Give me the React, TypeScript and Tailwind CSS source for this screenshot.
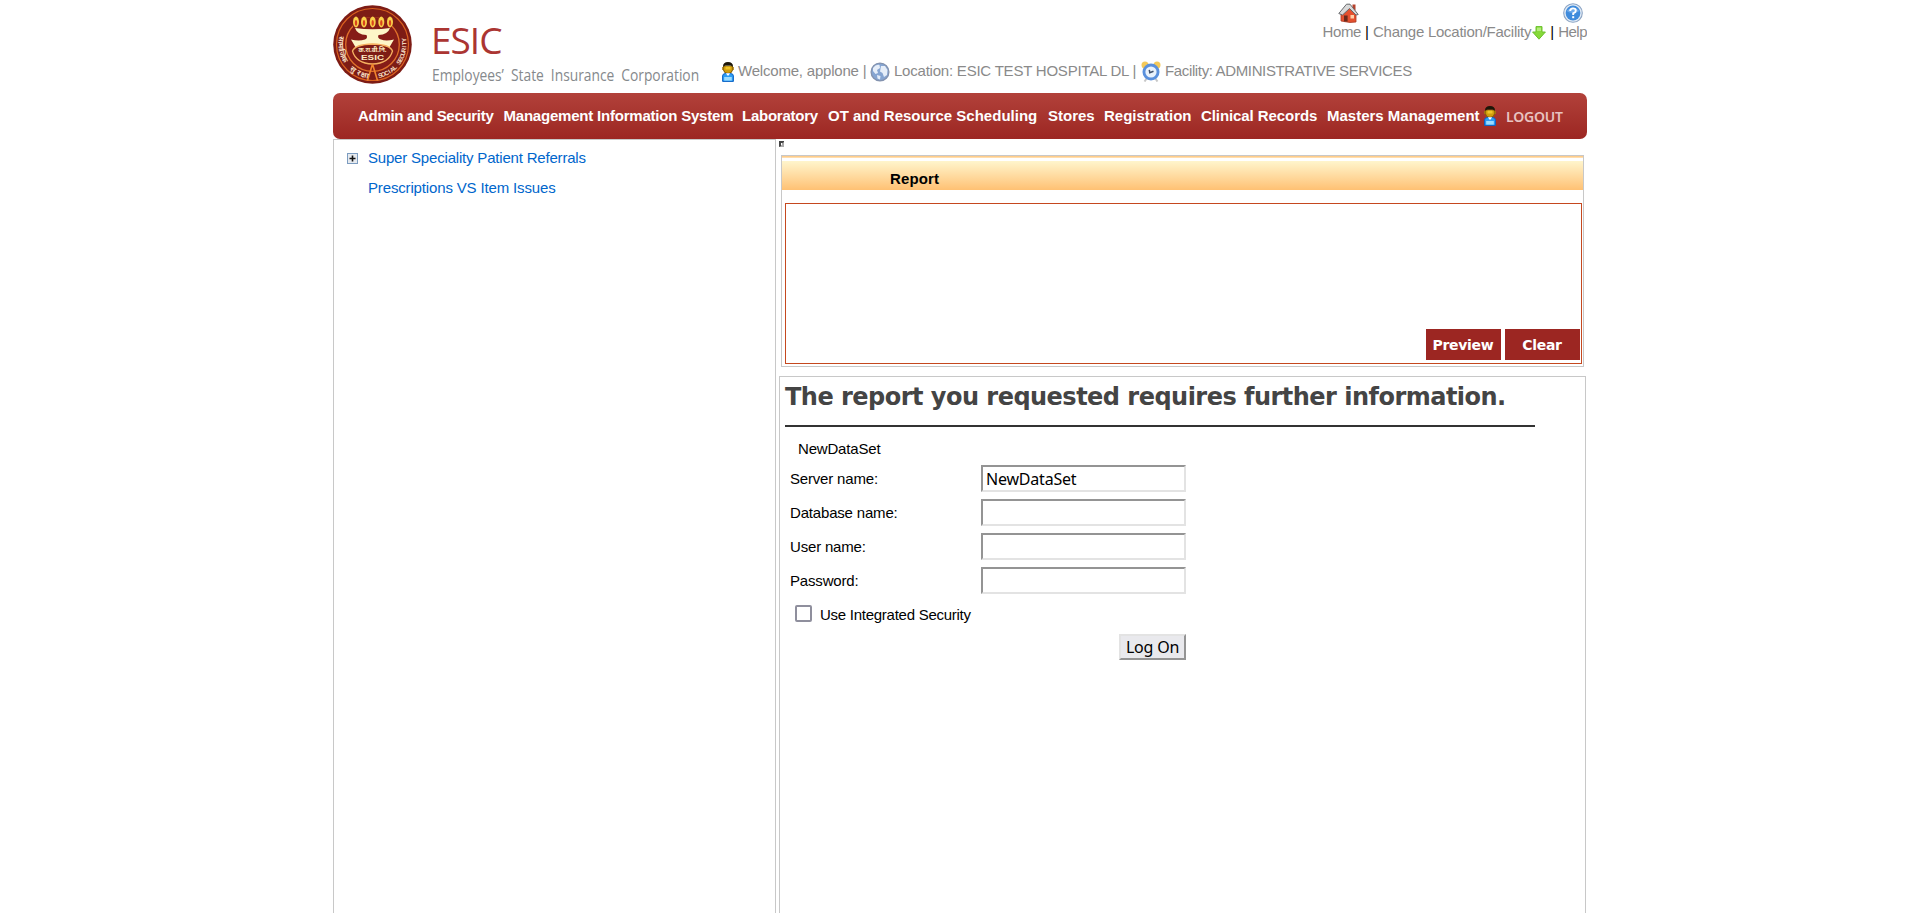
import React from "react";

function RimLetters({ glyphs, from, to, size, family }: { glyphs: string[]; from: number; to: number; size: number; family: string }) {
  return (
    <>
      {glyphs.map((g, i) => {
        if (g === " ") return null;
        const a = from + ((to - from) * i) / (glyphs.length - 1);
        const rad = (a * Math.PI) / 180;
        const x = 39.5 + 34 * Math.cos(rad);
        const y = 39.5 + 34 * Math.sin(rad);
        return (
          <text
            key={i}
            transform={`translate(${x.toFixed(2)} ${y.toFixed(2)}) rotate(${(a - 90).toFixed(1)})`}
            textAnchor="middle"
            fontSize={size}
            fontWeight="bold"
            fill="#f5dcc0"
            fontFamily={family}
          >
            {g}
          </text>
        );
      })}
    </>
  );
}

function Emblem() {
  return (
    <svg width="80" height="80" viewBox="0 0 80 80" className="block">
      <circle cx="39.5" cy="39.5" r="39.3" fill="#7d1c15" />
      <circle cx="39.5" cy="39.5" r="36" fill="none" stroke="#d9601f" strokeWidth="1.2" />
      <circle cx="39.5" cy="39.5" r="26.8" fill="#861c17" stroke="#e0702a" strokeWidth="1.3" />
      <path d="M19 19 Q39.5 5 60 19 L57 26 L22 26Z" fill="#861c17" />
      {[23, 31, 39.7, 48.3, 57].map((x) => (
        <g key={x}>
          <ellipse cx={x} cy="17" rx="3" ry="5.4" fill="#f9cf4a" />
          <ellipse cx={x} cy="18" rx="1.2" ry="3" fill="#d9441c" />
        </g>
      ))}
      <path d="M22 23 Q40 25.5 57 23 Q55 29.5 45.5 30 Q44 33 48 34.5 Q53 36.5 61 34.5 L56 43 Q40 36 23 43 L18 34.5 Q26 36.5 32 34.5 Q35 33 33.5 30 Q24 29.5 22 23Z" fill="#fdf6c8" />
      <path d="M19.5 46 Q22 39.5 39.5 39 Q57 39.5 59.5 46 Q56 58.5 39.5 59 Q23 58.5 19.5 46Z" fill="#7d1c15" stroke="#f5b060" strokeWidth="1.3" />
      <path d="M39.5 59 L34.5 75.5 M39.5 59 L44.5 75.5" fill="none" stroke="#f0842e" strokeWidth="1.6" />
      <text x="39.5" y="47.4" textAnchor="middle" fontSize="6.4" fontWeight="bold" fill="#fbe9c0" fontFamily="Noto Sans, sans-serif" textLength="28" lengthAdjust="spacingAndGlyphs">क.रा.बी.नि.</text>
      <text x="39.5" y="54.8" textAnchor="middle" fontSize="7" fontWeight="bold" fill="#fbe9c0" fontFamily="Liberation Sans, sans-serif" textLength="23" lengthAdjust="spacingAndGlyphs">ESIC</text>
      <RimLetters glyphs={[..."SOCIAL SECURITY"]} from={76} to={-8} size={6.2} family="Liberation Sans, sans-serif" />
      <RimLetters glyphs={["सा", "मा", "जि", "क", " ", "सु", "र", "क्षा"]} from={188} to={104} size={7.4} family="Noto Sans, sans-serif" />
    </svg>
  );
}

function UserIcon() {
  return (
    <svg width="12" height="20" viewBox="0 0 12 20" className="block shrink-0">
      <path d="M1.5 4 L10.5 4 L10.5 8 Q10 11.5 6 11.5 Q2 11.5 1.5 8Z" fill="#d19c0c" stroke="#7a5a08" />
      <rect x="0.2" y="5" width="1.5" height="3" fill="#a97a08" />
      <rect x="10.3" y="5" width="1.5" height="3" fill="#a97a08" />
      <path d="M1 4.5 Q1 0 6 0 Q11 0 11 4.5 L8.5 3.5 L3.5 3.5Z" fill="#1c1608" />
      <rect x="3.5" y="4.5" width="5" height="3" fill="#f0c426" />
      <path d="M0.6 19.4 L0.6 14 Q0.6 11.5 3.5 11.5 L8.5 11.5 Q11.4 11.5 11.4 14 L11.4 19.4Z" fill="#2c9cf4" stroke="#0b62c4" />
      <path d="M3.8 11.3 L8.2 11.3 L6 14Z" fill="#fff" />
      <rect x="2.2" y="15" width="7.6" height="3.6" fill="#9bdcff" />
    </svg>
  );
}

function GlobeIcon() {
  return (
    <svg width="20" height="20" viewBox="0 0 20 20" className="block shrink-0">
      <circle cx="10" cy="10" r="8.9" fill="#86a5d2" stroke="#8392ae" strokeWidth="1.3" />
      <path d="M3 6 Q6 2 9.5 3 L10 6 L7 8 L8 11 L5.5 12 L3 9Z M11 4 L15 4 L17.5 8 L17 13 L14 15 L12.5 11 L10 9.5Z M7 13 L10.5 14 L10 17.5 L7.5 16.5Z" fill="#e6eef9" />
    </svg>
  );
}

function ClockIcon() {
  return (
    <svg width="20" height="21" viewBox="0 0 20 21" className="block shrink-0">
      <path d="M3.5 20.5 L6 17 M16.5 20.5 L14 17" stroke="#c7c7c7" strokeWidth="2" />
      <circle cx="4" cy="4" r="3.5" fill="#f4c95a" />
      <circle cx="16" cy="4" r="3.5" fill="#f4c95a" />
      <circle cx="10" cy="11" r="8.5" fill="#5a90dc" />
      <circle cx="10" cy="11" r="5.6" fill="#e9f2fc" />
      <path d="M8.3 8.8 L8.8 11.8 L12.5 10.3" fill="none" stroke="#40506a" strokeWidth="1.5" />
    </svg>
  );
}

function HomeIcon() {
  return (
    <svg width="21" height="20" viewBox="0 0 21 20" className="block">
      <rect x="14.5" y="1.5" width="3" height="6" fill="#b5422c" />
      <path d="M3 11 L10.5 4 L18 11 L18 19 L12 19.5 L3 18Z" fill="#e4512f" stroke="#a93a25" strokeWidth="0.8" />
      <rect x="6" y="12.5" width="3.6" height="6" fill="#6b2a1c" />
      <rect x="12.5" y="12" width="3.5" height="3.5" fill="#ffd0a8" />
      <path d="M0.8 10.5 L8.5 1.2 L12 1.2 L20.2 11.5 L18 12 L11.5 5.5 L4.5 12Z" fill="#d9d9d9" stroke="#66696c" strokeWidth="1" />
    </svg>
  );
}

function HelpIcon() {
  return (
    <svg width="20" height="20" viewBox="0 0 20 20" className="block">
      <circle cx="10" cy="10" r="9.3" fill="#e2ebf5" stroke="#8ba4c4" strokeWidth="1.1" />
      <circle cx="10" cy="10" r="7.4" fill="#3f8bdc" />
      <path d="M3.4 8 Q10 1 16.6 8 Q10 12 3.4 8" fill="#6faaea" />
      <path d="M7.2 8 Q7.2 5.4 10 5.4 Q12.8 5.4 12.8 7.7 Q12.8 9.2 10.2 10.4 L10.2 12" fill="none" stroke="#fff" strokeWidth="1.9" />
      <rect x="9.2" y="13.2" width="2" height="2" fill="#fff" />
    </svg>
  );
}

function DownIcon() {
  return (
    <svg width="14" height="14" viewBox="0 0 14 14" className="block shrink-0">
      <path d="M4 0.6 L10 0.6 L10 6 L13.4 6 L7 13.2 L0.6 6 L4 6Z" fill="#86d93a" stroke="#6cc12e" strokeWidth="1" />
      <path d="M5 1.6 L9 1.6 L9 5 L5 5Z" fill="#b4ec7c" />
    </svg>
  );
}

const menu: [string, string][] = [
  ["Admin and Security", "w-[145.5px] tracking-[-0.3px]"],
  ["Management Information System", "w-[238.5px] tracking-[-0.21px]"],
  ["Laboratory", "w-[86px] tracking-[-0.25px]"],
  ["OT and Resource Scheduling", "w-[220px]"],
  ["Stores", "w-[56px]"],
  ["Registration", "w-[97px]"],
  ["Clinical Records", "w-[126px] tracking-[-0.08px]"],
  ["Masters Management", "w-[157px]"],
];

function Field({ label, value, type = "text" }: { label: string; value?: string; type?: string }) {
  return (
    <div className="flex h-[34px] items-start">
      <label className="w-[191px] pt-[5px] text-[15px] leading-[18px] tracking-[-0.18px]">{label}</label>
      <input
        type={type}
        defaultValue={value}
        className="h-[27px] w-[205px] border-2 border-t-[#949494] border-l-[#949494] border-r-[#e3e3e3] border-b-[#e3e3e3] bg-white px-[3px] font-['Noto_Sans',sans-serif] text-[16px] leading-[22px] tracking-[-0.2px] outline-none"
      />
    </div>
  );
}

export default function App() {
  return (
    <div className="mx-auto flex h-[913px] w-[1254px] flex-col overflow-hidden bg-white font-['Liberation_Sans',Arial,sans-serif] text-[15px] text-black">
      <header className="flex h-[93px] shrink-0">
        <div className="w-[98px] pt-[5px]">
          <Emblem />
        </div>
        <div className="w-[291px] whitespace-nowrap font-['Open_Sans',sans-serif]">
          <div className="mt-[18px] h-[44px] text-[37px] leading-[44px] tracking-[-1px] text-[#ab3532]">ESIC</div>
          <div className="mt-[3px] ml-px w-max origin-left scale-x-[0.862] text-[16px] leading-[20px] [word-spacing:4px] text-[#85898c]">Employees’ State Insurance Corporation</div>
        </div>
        <div className="flex flex-1 flex-col text-[#8a8a8a]">
          <div className="flex h-[42px] justify-end whitespace-nowrap">
            <div className="flex flex-col items-center pt-[3px]">
              <span className="pl-[14px]"><HomeIcon /></span>
              <span className="leading-[18px] tracking-[-0.35px]">Home</span>
            </div>
            <div className="flex items-start pt-[22px] leading-[20px]">
              <span className="px-[4px] text-black">|</span>
              <span className="tracking-[-0.25px]">Change Location/Facility</span>
              <span className="pt-[4px] pl-px"><DownIcon /></span>
              <span className="px-[4px] text-black">|</span>
            </div>
            <div className="flex flex-col items-center pt-[3px]">
              <HelpIcon />
              <span className="leading-[18px] tracking-[-0.5px]">Help</span>
            </div>
          </div>
          <div className="mt-[18px] flex h-[23px] items-center whitespace-nowrap">
            <span className="w-[16px] pt-px"><UserIcon /></span>
            <span className="w-[132px] tracking-[-0.2px]">Welcome, applone |</span>
            <span className="w-[24px] pt-px"><GlobeIcon /></span>
            <span className="w-[247px] tracking-[-0.22px]">Location: ESIC TEST HOSPITAL DL |</span>
            <span className="w-[24px]"><ClockIcon /></span>
            <span className="tracking-[-0.36px]">Facility: ADMINISTRATIVE SERVICES</span>
          </div>
        </div>
      </header>

      <nav className="flex h-[46px] shrink-0 items-center rounded-[7px] bg-linear-to-b from-[#b2413a] to-[#9c2622] pl-[25px] text-white">
        {menu.map(([label, width]) => (
          <span key={label} className={`${width} shrink-0 whitespace-nowrap text-[15px] font-bold`}>{label}</span>
        ))}
        <span className="pb-px"><UserIcon /></span>
        <span className="ml-[10px] pt-px font-['Noto_Sans',sans-serif] text-[14px] font-semibold tracking-[-0.2px] text-[#e8c3c1]">LOGOUT</span>
      </nav>

      <main className="flex flex-1">
        <aside className="w-[443px] shrink-0 border border-b-0 border-[#c8c8c8] text-[#0066cc]">
          <div className="mt-[9px] flex h-[18px] items-center pl-[13px]">
            <svg width="11" height="11" viewBox="0 0 11 11" className="mr-[10px] shrink-0">
              <rect x="0.5" y="0.5" width="10" height="10" fill="#e6eaef" stroke="#7c9cc0" />
              <path d="M2.5 5.5 H8.5 M5.5 2.5 V8.5" stroke="#111" strokeWidth="1.6" />
            </svg>
            <span className="tracking-[-0.19px]">Super Speciality Patient Referrals</span>
          </div>
          <div className="mt-[12px] pl-[34px] leading-[18px] tracking-[-0.15px]">Prescriptions VS Item Issues</div>
        </aside>

        <section className="ml-[3px] flex w-[807px] flex-col">
          <div className="h-[16px] pt-[2px]">
            <svg width="5" height="6" className="block">
              <rect width="5" height="6" fill="#aaa" />
              <path d="M0 0 H5 V1 L2 3 V5 L0 6Z" fill="#444" />
              <rect x="2" y="2" width="1" height="2" fill="#fff" />
            </svg>
          </div>
          <div className="ml-[2px] h-[212px] w-[803px] border border-[#c8c8c8]">
            <div className="h-[2px] bg-linear-to-b from-[#ffc477] to-[#ffe6c0]" />
            <div className="mt-[3px] h-[29px] bg-linear-to-b from-[#fff5cc] to-[#ffc173] pt-[9px] pl-[108px] text-[15px] leading-[17px] font-bold tracking-[0.12px]">Report</div>
            <div className="mt-[13px] ml-[3px] flex h-[161px] w-[797px] items-end justify-end gap-[4px] border border-[#c5481f] pr-px pb-[3px] font-['DejaVu_Sans',sans-serif] text-[14px] font-bold tracking-[-0.3px] text-white">
              <button className="h-[31px] w-[75px] bg-[#9c2622] pt-px pr-px">Preview</button>
              <button className="h-[31px] w-[75px] bg-[#9c2622] pt-px pr-px">Clear</button>
            </div>
          </div>
          <div className="mt-[9px] flex-1 border border-b-0 border-[#c8c8c8] pl-[5px]">
            <h1 className="h-[50px] w-[750px] border-b-2 border-[#333] pt-[6px] font-['DejaVu_Sans',sans-serif] text-[24px] leading-[28px] font-bold tracking-[-0.52px] whitespace-nowrap text-[#444]">The report you requested requires further information.</h1>
            <div className="mt-[13px] pl-[13px] leading-[18px] tracking-[-0.18px]">NewDataSet</div>
            <div className="mt-[7px] pl-[5px]">
              <Field label="Server name:" value="NewDataSet" />
              <Field label="Database name:" />
              <Field label="User name:" />
              <Field label="Password:" type="password" />
              <label className="flex h-[33px] items-start">
                <input type="checkbox" className="mt-[4px] ml-[5px] h-[17px] w-[17px] appearance-none rounded-[2px] border-2 border-[#8f8f9d] bg-white" />
                <span className="ml-[8px] pt-[5px] leading-[18px] tracking-[-0.26px]">Use Integrated Security</span>
              </label>
              <div className="flex w-[396px] justify-end">
                <button className="h-[26px] w-[67px] border-2 border-t-[#e3e3e3] border-r-[#949494] border-b-[#949494] border-l-[#e3e3e3] bg-[#e9e9ed] pt-px font-['Noto_Sans',sans-serif] text-[16px] leading-[21px] tracking-[-0.2px]">Log On</button>
              </div>
            </div>
          </div>
        </section>
      </main>
    </div>
  );
}
